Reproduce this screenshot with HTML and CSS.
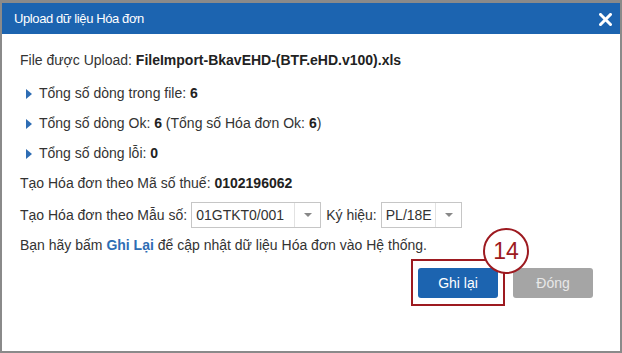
FILE: index.html
```html
<!DOCTYPE html>
<html lang="vi">
<head>
    <meta charset="UTF-8">
    <meta name="viewport" content="width=device-width, initial-scale=1.0">
    <title>Upload dữ liệu Hóa đơn</title>
    <link rel="stylesheet" href="styles.css">
</head>
<body>
    <div class="modal">
        <div class="modal-header">
            <span class="modal-title">Upload dữ liệu Hóa đơn</span>
            <span class="close">
                <svg width="13" height="13" viewBox="0 0 13 13">
                    <path d="M1.5 1.5 L11.5 11.5 M11.5 1.5 L1.5 11.5" stroke="#fff" stroke-width="3" stroke-linecap="square"/>
                </svg>
            </span>
        </div>

        <div class="modal-body">
            <p class="row first">File được Upload: <b>FileImport-BkavEHD-(BTF.eHD.v100).xls</b></p>
            <ul class="stats">
                <li class="row">Tổng số dòng trong file: <b>6</b></li>
                <li class="row">Tổng số dòng Ok: <b>6</b> (Tổng số Hóa đơn Ok: <b>6</b>)</li>
                <li class="row">Tổng số dòng lỗi: <b>0</b></li>
            </ul>
            <p class="row">Tạo Hóa đơn theo Mã số thuế: <b>0102196062</b></p>
            <div class="row form-row">
                <label>Tạo Hóa đơn theo Mẫu số:</label>
                <div class="select select-mau">
                    <span class="value">01GTKT0/001</span>
                    <span class="arrow"></span>
                </div>
                <label>Ký hiệu:</label>
                <div class="select select-kh">
                    <span class="value">PL/18E</span>
                    <span class="arrow"></span>
                </div>
            </div>
            <p class="row">Bạn hãy bấm <b class="link">Ghi Lại</b> để cập nhật dữ liệu Hóa đơn vào Hệ thống.</p>
        </div>

        <div class="modal-footer">
            <div class="mark">
                <button class="btn btn-primary">Ghi lại</button>
                <span class="step">14</span>
            </div>
            <button class="btn btn-close">Đóng</button>
        </div>
    </div>
</body>
</html>
```

FILE: styles.css
```css
* {
    box-sizing: border-box;
}

body {
    margin: 0;
    height: 353px;
    padding: 3px 2px 2px 2px;
    background-color: #8a8a8a;
    font-family: "Liberation Sans", Arial, sans-serif;
    font-size: 14px;
    color: #333;
    overflow: hidden;
}

/* modal box */
.modal {
    height: 348px;
    background-color: #fff;
}

.modal-header {
    display: flex;
    align-items: center;
    justify-content: space-between;
    height: 31px;
    padding: 0 8px 0 12px;
    background-color: #1c64b0;
    color: #fff;
}

.modal-title {
    font-size: 13px;
    letter-spacing: -0.4px;
}

.close {
    display: flex;
    margin-top: 1px;
}

.modal-body {
    padding: 11px 16px 0 18px;
}

.row {
    margin: 0;
    height: 30px;
    line-height: 30px;
    white-space: nowrap;
}

.row.first {
    margin-bottom: 3px;
}

b {
    color: #222;
}

/* list with blue triangles */
.stats {
    list-style: none;
    margin: 0;
    padding: 0;
}

.stats li {
    padding-left: 6px;
}

.stats li::before {
    content: "";
    display: inline-block;
    width: 0;
    height: 0;
    margin-right: 7px;
    vertical-align: -1px;
    border-top: 5px solid transparent;
    border-bottom: 5px solid transparent;
    border-left: 6px solid #2e6db4;
}

/* select boxes */
.form-row {
    display: flex;
    align-items: center;
    gap: 5px;
    margin-top: 2px;
}

.form-row label {
    margin-right: -1px;
}

.select {
    display: flex;
    height: 26px;
    border: 1px solid #c6c6c6;
    line-height: 24px;
    background-color: #fff;
}

.select .value {
    flex: 1;
    padding-left: 4px;
    color: #333;
}

.select .arrow {
    position: relative;
    width: 26px;
    border-left: 1px solid #e2e2e2;
}

.select .arrow::after {
    content: "";
    position: absolute;
    left: 9px;
    top: 10px;
    border-left: 4px solid transparent;
    border-right: 4px solid transparent;
    border-top: 4px solid #888;
}

.select-mau {
    width: 130px;
}

.select-kh {
    width: 81px;
}

.link {
    color: #2e6db4;
}

/* footer buttons */
.modal-footer {
    display: flex;
    align-items: center;
    justify-content: flex-end;
    gap: 8px;
    margin-top: -1px;
    padding-right: 27px;
}

.btn {
    width: 80px;
    height: 30px;
    border: none;
    border-radius: 3px;
    font-family: "Liberation Sans", Arial, sans-serif;
    font-size: 14px;
    cursor: pointer;
}

.btn-primary {
    background-color: #1c64b0;
    color: #fff;
}

.btn-close {
    background-color: #a5a5a5;
    color: #e8e8e8;
    margin-top: 1px;
}

/* red annotation around Ghi lai */
.mark {
    position: relative;
    padding: 7px 5px 6px 5px;
    border: 2px solid #9d1a20;
}

.mark .btn {
    display: block;
}

.step {
    position: absolute;
    left: 70px;
    top: -33px;
    width: 46px;
    height: 46px;
    border: 2px solid #9d1a20;
    border-radius: 50%;
    background-color: #fff;
    color: #9d1a20;
    font-size: 23px;
    line-height: 42px;
    text-align: center;
}
```
